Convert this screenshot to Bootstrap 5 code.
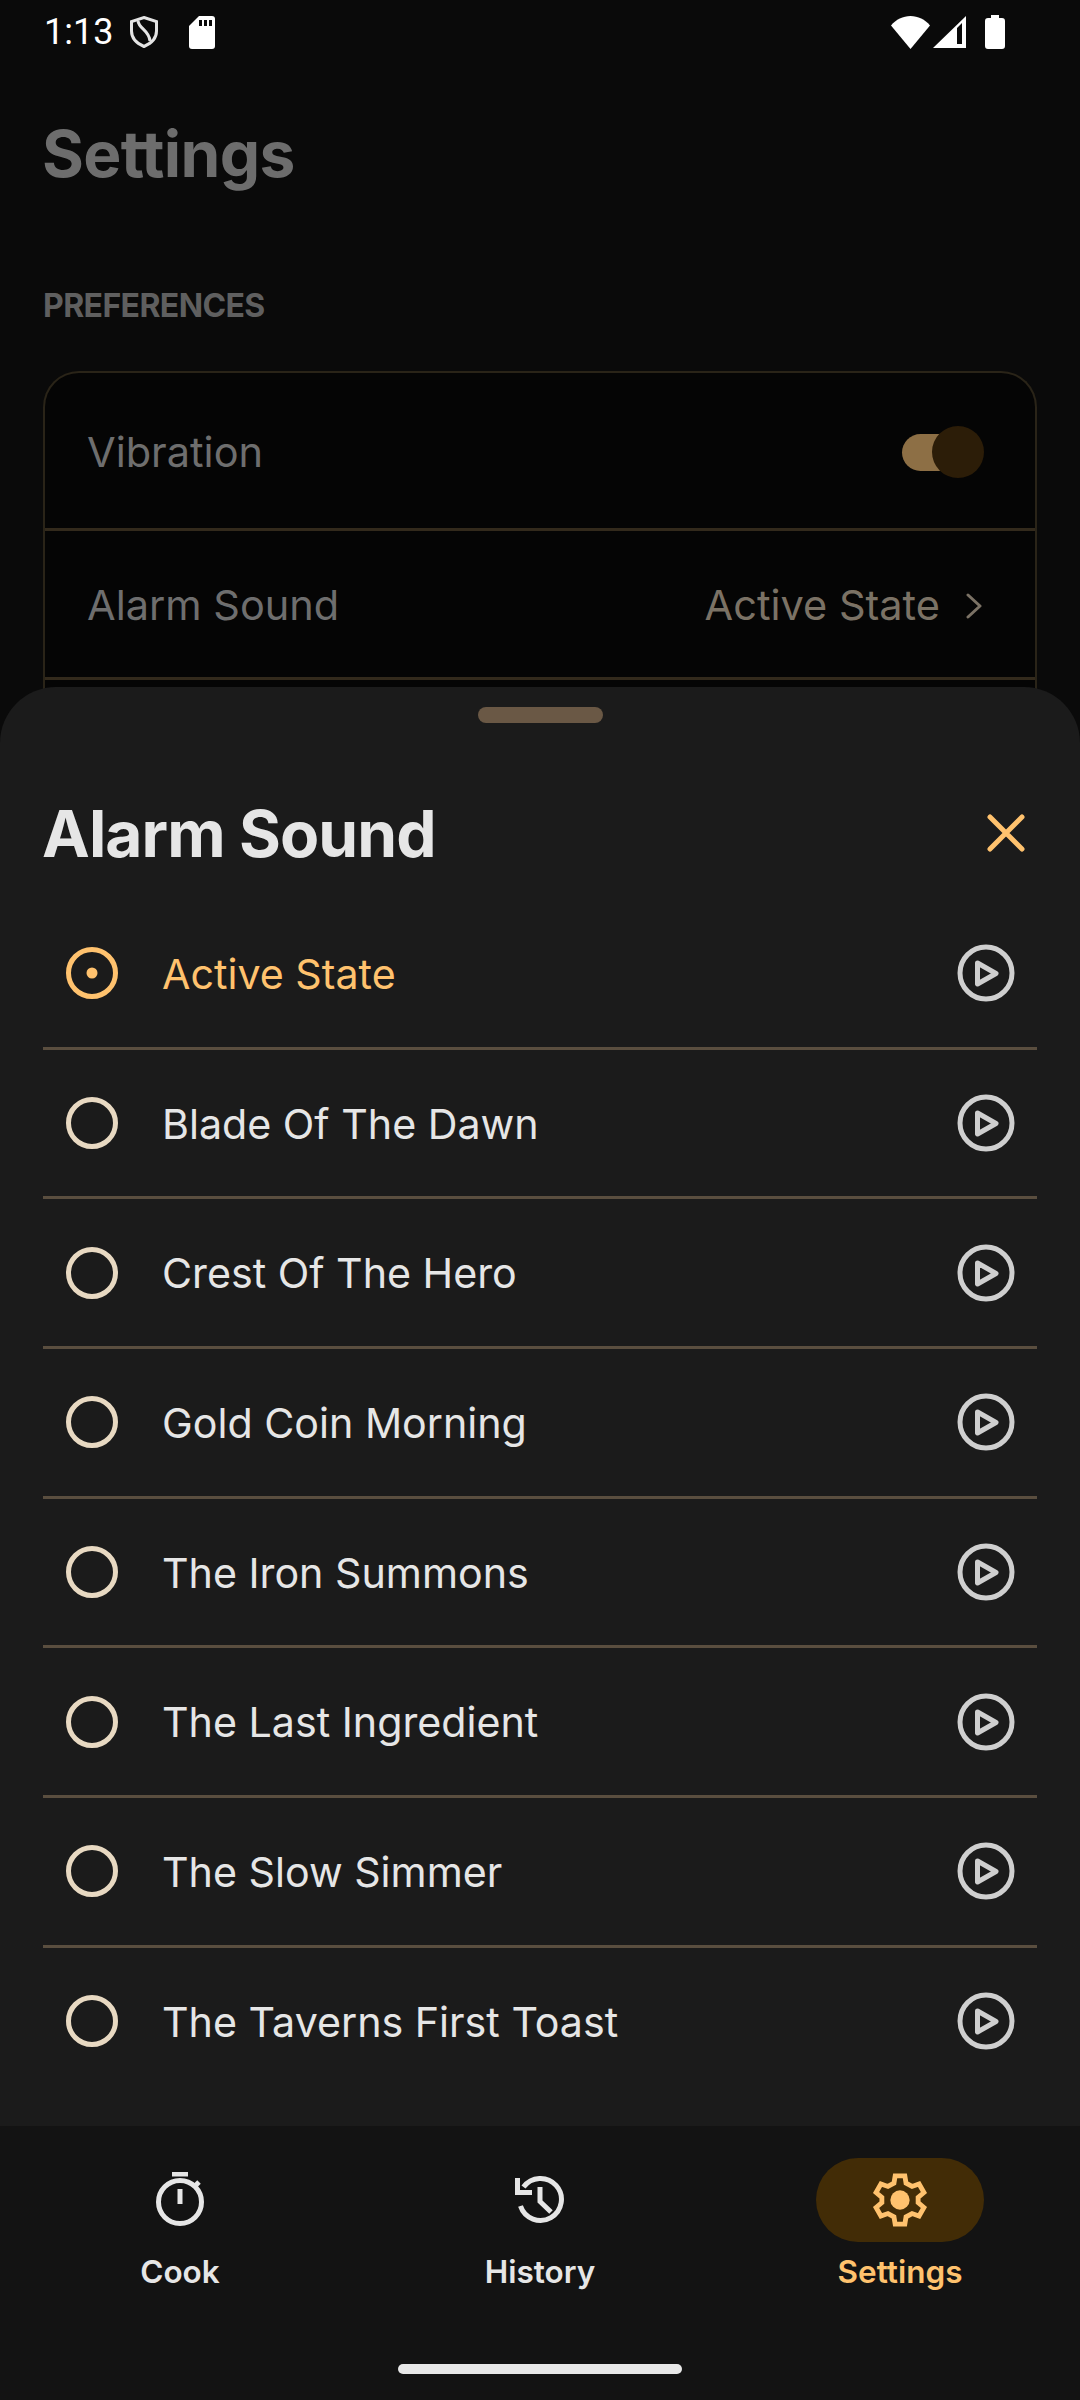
<!DOCTYPE html>
<html lang="en">
<head>
    <meta charset="UTF-8">
    <meta name="viewport" content="width=device-width, initial-scale=1.0">
    <title>Alarm Sound</title>
    <link rel="stylesheet" href="https://cdn.jsdelivr.net/npm/bootstrap@5.3.0/dist/css/bootstrap.min.css">
    <style>
        html, body { margin: 0; background: #0a0a0a; }
        body { font-family: Inter, "Liberation Sans", sans-serif; }
        .phone { width: 1080px; height: 2400px; position: relative; overflow: hidden; background: #0a0a0a; }

        .status-row { height: 68px; padding: 0 75px 4px 44px; color: #fff; font-family: Roboto, sans-serif; font-size: 36px; line-height: 36px; }
        .st-shield { margin-left: 17px; }
        .st-sd { margin-left: 31px; }
        .st-signal { margin-left: 3px; }
        .st-batt { margin-left: 19px; }
        .page-title { margin: 50px 0 0 42px; font-size: 64px; line-height: 72px; font-weight: 700; color: #6d6d6d; letter-spacing: -.7px; }
        .group-label { margin: 98px 0 0 43px; font-size: 32px; line-height: 36px; font-weight: 700; color: #5f5f5f; letter-spacing: -.6px; }
        .pref-box { margin: 47px 43px 0; border: 2px solid #2a2418; border-bottom: 0; border-radius: 36px 36px 0 0; background: #050505; }
        .pref-line { padding: 3px 51px 0 42px; font-size: 41.5px; color: #6e6e6e; border-bottom: 3px solid #332a1c; }
        .pref-line.one { height: 158px; }
        .pref-line.two { height: 149px; padding-right: 53px; }
        .pref-line.three { height: 60px; }
        .pref-val { color: #7b7265; }
        .pref-chev { margin-left: 26px; }
        .mini-switch { width: 82px; height: 52px; position: relative; }
        .mini-track { position: absolute; left: 0; top: 8px; width: 60px; height: 37px; background: #8d6f45; border-radius: 19px; }
        .mini-knob { position: absolute; right: 0; top: 0; width: 52px; height: 52px; background: #2c1d08; border-radius: 50%; }

        .overlay { position: absolute; left: 0; right: 0; top: 687px; bottom: 0; }
        .sheet { height: 1439px; background: #1b1b1b; border-radius: 56px 56px 0 0; padding: 20px 43px 0; }
        .grab { width: 125px; height: 16px; background: #6a5845; border-radius: 8px; margin: 0 auto; }
        .sheet-title { font-size: 64px; line-height: 72px; font-weight: 700; color: #e6e6e6; letter-spacing: -.9px; margin: 2px 0 0 -1px; }
        .sheet-head { margin-top: 74px; height: 72px; }
        .close-x { margin-right: 10px; }
        .sound-list { margin-top: 31px; }
        .sound-line { height: 149.7px; padding: 0 22px; font-size: 41.2px; color: #e6e6e6; border-bottom: 3px solid #5a4e3f; }
        .sound-line:last-child { border-bottom-color: transparent; }
        .sound-line.on { color: #ffc26e; }
        .sound-name { margin-left: 43px; padding-top: 3px; }
        .tab-bar { height: 274px; background: #131313; }
        .tab-item { width: 360px; color: #e6e6e6; font-size: 31.5px; font-weight: 600; line-height: 36px; }
        .tab-item.on { color: #ffc26e; }
        .tab-icon { width: 168px; height: 84px; border-radius: 42px; margin-top: 32px; margin-bottom: 12px; }
        .tab-item.on .tab-icon { background: #422c06; }
        .home-bar { position: absolute; left: 398px; bottom: 26px; width: 284px; height: 10px; background: #e8e8e8; border-radius: 5px; }
    </style>
</head>
<body>
<div class="phone">
    <div class="status-row d-flex align-items-center">
        <span>1:13</span>
        <svg class="st-shield" width="28" height="32" viewBox="0 0 28 32" fill="none" stroke="#e4e4e4" stroke-width="3"><path d="M14 1.5 L26.5 5.5 V15 C26.5 22.5 21 27.5 14 30.5 C7 27.5 1.500 22.500 1.500 15 V5.500 Z"/><path d="M8 5 C9 13 19 14 20 25"/></svg>
        <svg class="st-sd" width="26" height="33" viewBox="0 0 26 33" fill="#fff"><path d="M10 0 H23 a3 3 0 0 1 3 3 V30 a3 3 0 0 1 -3 3 H3 a3 3 0 0 1 -3 -3 V10 Z"/><path fill="#0a0a0a" d="M10 4h3v6h-3zM15 4h3v6h-3zM20 4h3v6h-3z"/></svg>
        <svg class="ms-auto" width="39" height="33" viewBox="0 0 39 33" fill="#fff"><path d="M19.500 33 L0 9.500 C5 3.500 12 0 19.500 0 C27 0 34 3.500 39 9.500 Z"/></svg>
        <svg class="st-signal" width="33" height="32" viewBox="0 0 33 32" fill="#fff" fill-rule="evenodd"><path d="M33 0 V32 H0 Z M29 7 L24 12 V28 H29 Z"/></svg>
        <svg class="st-batt" width="20" height="34" viewBox="0 0 20 34" fill="#fff"><path d="M6 0 H14 V3 H17 a3 3 0 0 1 3 3 V31 a3 3 0 0 1 -3 3 H3 a3 3 0 0 1 -3 -3 V6 a3 3 0 0 1 3 -3 H6 Z"/></svg>
    </div>
    <h1 class="page-title">Settings</h1>
    <div class="group-label">PREFERENCES</div>
    <div class="pref-box">
        <div class="pref-line one d-flex align-items-center justify-content-between">
            <span>Vibration</span>
            <div class="mini-switch"><div class="mini-track"></div><div class="mini-knob"></div></div>
        </div>
        <div class="pref-line two d-flex align-items-center justify-content-between">
            <span>Alarm Sound</span>
            <span class="pref-val d-flex align-items-center">Active State
                <svg class="pref-chev" width="16" height="26" viewBox="0 0 16 26" fill="none" stroke="#7b7265" stroke-width="3" stroke-linecap="round" stroke-linejoin="round"><path d="M2 2 L14 13 L2 24"/></svg>
            </span>
        </div>
        <div class="pref-line three"></div>
    </div>

    <div class="overlay d-flex flex-column">
        <div class="sheet">
            <div class="grab"></div>
            <div class="sheet-head d-flex align-items-center justify-content-between">
                <h2 class="sheet-title">Alarm Sound</h2>
                <svg class="close-x" width="42" height="42" viewBox="0 0 42 42" stroke="#ffc26e" stroke-width="5" stroke-linecap="round"><path d="M5 5 L37 37 M37 5 L5 37"/></svg>
            </div>
            <div class="sound-list" id="sounds"></div>
        </div>
        <div class="tab-bar d-flex">
            <div class="tab-item d-flex flex-column align-items-center">
                <div class="tab-icon d-flex align-items-center justify-content-center">
                    <svg width="48" height="56" viewBox="0 0 48 56" fill="none" stroke="#e6e6e6" stroke-width="5"><path d="M16 2 H32"/><circle cx="24" cy="30" r="21.500"/><path d="M24 17 V32"/><path d="M39 14 L43 10"/></svg>
                </div>
                <span>Cook</span>
            </div>
            <div class="tab-item d-flex flex-column align-items-center">
                <div class="tab-icon d-flex align-items-center justify-content-center">
                    <svg width="50" height="50" viewBox="0 0 50 50" fill="none" stroke="#e6e6e6" stroke-width="5"><path d="M8.500 12 A21 21 0 1 1 5.500 31"/><path d="M2.500 3 V17.500 H17"/><path d="M25 12 V26.500 L36 37"/></svg>
                </div>
                <span>History</span>
            </div>
            <div class="tab-item on d-flex flex-column align-items-center">
                <div class="tab-icon d-flex align-items-center justify-content-center">
                    <svg width="58" height="58" viewBox="0 0 24 24" fill="none" stroke="#ffc26e" stroke-width="2"><path d="M10 2 h4 l.5 3 2.500 1.400 2.900-1 2 3.500-2.400 2 v2.200 l2.400 2-2 3.500-2.900-1-2.500 1.400-.5 3 h-4 l-.5-3-2.500-1.400-2.900 1-2-3.500 2.400-2 v-2.200 l-2.400-2 2-3.500 2.900 1 2.500-1.400 z"/><circle cx="12" cy="12" r="4" fill="#ffc26e" stroke="none"/></svg>
                </div>
                <span>Settings</span>
            </div>
        </div>
    </div>
    <div class="home-bar"></div>
</div>
<script>
    const names = ['Active State', 'Blade Of The Dawn', 'Crest Of The Hero', 'Gold Coin Morning', 'The Iron Summons', 'The Last Ingredient', 'The Slow Simmer', 'The Taverns First Toast'];
    document.getElementById('sounds').innerHTML = names.map((n, i) => {
        const c = i === 0 ? '#ffc26e' : '#e8d9c2';
        const dot = i === 0 ? `<circle cx="27" cy="27" r="5.500" fill="${c}"/>` : '';
        return `<div class="sound-line d-flex align-items-center${i === 0 ? ' on' : ''}">
            <svg width="54" height="54" viewBox="0 0 54 54" fill="none"><circle cx="27" cy="27" r="23.500" stroke="${c}" stroke-width="5"/>${dot}</svg>
            <span class="sound-name flex-grow-1">${n}</span>
            <svg width="58" height="58" viewBox="0 0 58 58" fill="none" stroke="#cfcfcf" stroke-width="5" stroke-linejoin="round"><circle cx="29" cy="29" r="26"/><path d="M20.500 19 L39 29.500 L20.500 40 Z"/></svg>
        </div>`;
    }).join('');
</script>
</body>
</html>
